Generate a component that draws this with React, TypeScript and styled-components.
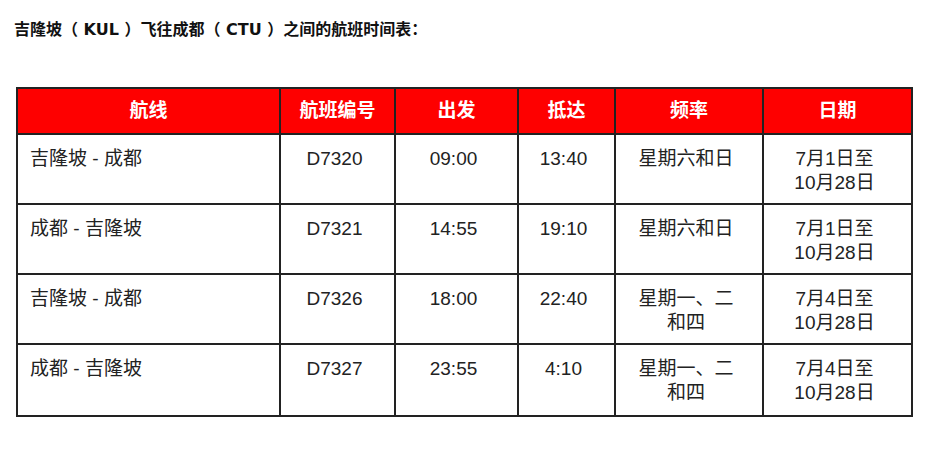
import React from 'react'
import styled, { createGlobalStyle } from 'styled-components'

const GlobalStyle = createGlobalStyle`
    body {
        margin: 0;
        background: #fff;
        font-family: "Liberation Sans", "Noto Sans CJK SC", sans-serif;
        color: #222;
    }
`;

const Page = styled.div`
    padding: 20px 0 0 14px;
`;

const Title = styled.h3`
    margin: 0 0 47px 0;
    font-family: "DejaVu Sans", "Noto Sans CJK SC", sans-serif;
    font-size: 16px;
    line-height: 20px;
    font-weight: bold;
    color: #111;
`;

const Table = styled.table`
    margin-left: 2px;
    width: 896px;
    border-collapse: collapse;
    table-layout: fixed;
`;

const HeadCell = styled.th`
    height: 46px;
    padding: 0;
    box-sizing: border-box;
    background: #fe0000;
    color: #fff;
    font-size: 19px;
    line-height: 24px;
    font-weight: bold;
    text-align: center;
    vertical-align: middle;
    border: 2px solid #222;
`;

const Row = styled.tr<{ $tall?: boolean }>`
    height: ${(p) => (p.$tall ? '72px' : '70px')};
`;

const Cell = styled.td<{ $left?: boolean }>`
    padding: 12px 12px 0 ${(p) => (p.$left ? '12px' : '6px')};
    box-sizing: border-box;
    font-size: 19px;
    line-height: 24px;
    text-align: ${(p) => (p.$left ? 'left' : 'center')};
    vertical-align: top;
    border: 2px solid #222;
    color: #222;
`;

const columns = [
    { title: '航线', width: 263 },
    { title: '航班编号', width: 115 },
    { title: '出发', width: 123 },
    { title: '抵达', width: 97 },
    { title: '频率', width: 148 },
    { title: '日期', width: 149 },
];

const flights = [
    { route: '吉隆坡 - 成都', no: 'D7320', dep: '09:00', arr: '13:40', freq: ['星期六和日'], date: ['7月1日至', '10月28日'] },
    { route: '成都 - 吉隆坡', no: 'D7321', dep: '14:55', arr: '19:10', freq: ['星期六和日'], date: ['7月1日至', '10月28日'] },
    { route: '吉隆坡 - 成都', no: 'D7326', dep: '18:00', arr: '22:40', freq: ['星期一、二', '和四'], date: ['7月4日至', '10月28日'] },
    { route: '成都 - 吉隆坡', no: 'D7327', dep: '23:55', arr: '4:10', freq: ['星期一、二', '和四'], date: ['7月4日至', '10月28日'] },
];

function Lines({ items }: { items: string[] }) {
    return (
        <>
            {items.map((t, i) => (
                <div key={i}>{t}</div>
            ))}
        </>
    );
}

export default function App() {
    return (
        <Page>
            <GlobalStyle />
            <Title>吉隆坡（ KUL ）飞往成都（ CTU ）之间的航班时间表：</Title>
            <Table>
                <colgroup>
                    {columns.map((c) => (
                        <col key={c.title} style={{ width: c.width }} />
                    ))}
                </colgroup>
                <thead>
                    <tr>
                        {columns.map((c) => (
                            <HeadCell key={c.title}>{c.title}</HeadCell>
                        ))}
                    </tr>
                </thead>
                <tbody>
                    {flights.map((f, i) => (
                        <Row key={f.no} $tall={i === flights.length - 1}>
                            <Cell $left>{f.route}</Cell>
                            <Cell>{f.no}</Cell>
                            <Cell>{f.dep}</Cell>
                            <Cell>{f.arr}</Cell>
                            <Cell><Lines items={f.freq} /></Cell>
                            <Cell><Lines items={f.date} /></Cell>
                        </Row>
                    ))}
                </tbody>
            </Table>
        </Page>
    );
}
